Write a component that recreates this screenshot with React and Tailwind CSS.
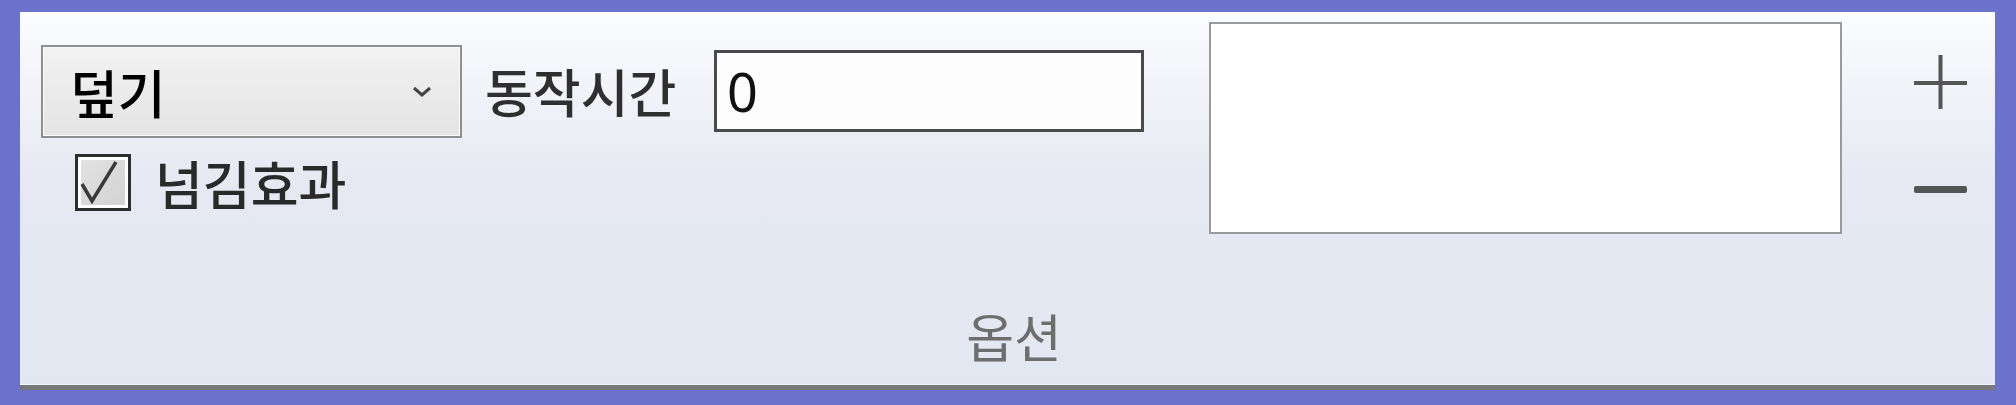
import React from "react";

const font = { fontFamily: '"Noto Sans CJK KR", "Noto Sans", sans-serif' };

export default function App() {
  return (
    <div
      className="w-[2016px] h-[405px] bg-[#6a72c9] pt-[12px] pl-[20px] pr-[21px] pb-[15px] overflow-hidden"
      style={font}
    >
      <div className="h-full flex flex-col bg-gradient-to-b from-[#fbfcfe] via-[#e6e9f2] via-45% to-[#e3e7f1] border-b-[5px] border-[#77787a] shadow-[inset_0_-1px_0_#eef2fa]">
        <div className="flex items-start pl-[21px]">
          {/* column 1 */}
          <div className="flex flex-col w-[421px]">
            <div className="mt-[33px] w-[421px] h-[93px] border-2 border-[#8f8f8f] bg-gradient-to-b from-[#f2f2f2] to-[#e4e4e4] flex items-center justify-between pl-[27px] pr-[27px] shadow-[inset_0_0_0_1px_#fafafa]">
              <span className="text-[52px] leading-none text-black font-medium">덮기</span>
              <svg width="22" height="13" viewBox="0 0 22 13">
                <path d="M3 3 L11 10 L19 3" fill="none" stroke="#444" strokeWidth="3" />
              </svg>
            </div>
            <div className="flex items-center mt-[16px] ml-[34px]">
              <div className="w-[56px] h-[57px] border-[3px] border-[#2e2e2e] bg-white p-[3px] shrink-0">
                <div className="w-full h-full bg-gradient-to-br from-[#e2e2e2] to-[#d2d2d2] relative">
                  <svg className="absolute -left-[3px] -top-[3px]" width="50" height="51" viewBox="0 0 50 51">
                    <path d="M4 27 L14 44 L38 5" fill="none" stroke="#3a3a3a" strokeWidth="3.5" />
                  </svg>
                </div>
              </div>
              <span className="ml-[24px] text-[52px] leading-none text-[#2a2a2a] font-medium whitespace-nowrap">넘김효과</span>
            </div>
          </div>

          {/* column 2 */}
          <div className="flex items-center mt-[38px] ml-[23px]">
            <div className="w-[229px]">
              <span className="text-[52px] leading-none text-[#2f2f2f] font-medium whitespace-nowrap">동작시간</span>
            </div>
            <div className="w-[430px] h-[82px] border-[3px] border-[#4a4a4a] bg-[#fdfdfd] flex items-center pl-[10px]">
              <span className="text-[54px] leading-none text-[#111]" style={{ fontFamily: '"Noto Sans", sans-serif' }}>0</span>
            </div>
          </div>

          {/* column 3 */}
          <div className="ml-[65px] mt-[10px] w-[633px] h-[212px] border-2 border-[#9a9a9a] bg-white" />

          {/* column 4 */}
          <div className="ml-[72px] mt-[43px] flex flex-col items-center w-[53px]">
            <svg width="53" height="54" viewBox="0 0 53 54">
              <rect x="0" y="26" width="53" height="4" fill="#555" />
              <rect x="24.5" y="0" width="4" height="54" fill="#555" />
            </svg>
            <svg className="mt-[77px]" width="53" height="8" viewBox="0 0 53 8">
              <rect x="0" y="0" width="53" height="7" rx="2" fill="#555" />
            </svg>
          </div>
        </div>

        <div className="mt-auto pb-[23px] flex justify-center">
          <span className="text-[52px] leading-none text-[#6e6e6e] ml-[13px]">옵션</span>
        </div>
      </div>
    </div>
  );
}
